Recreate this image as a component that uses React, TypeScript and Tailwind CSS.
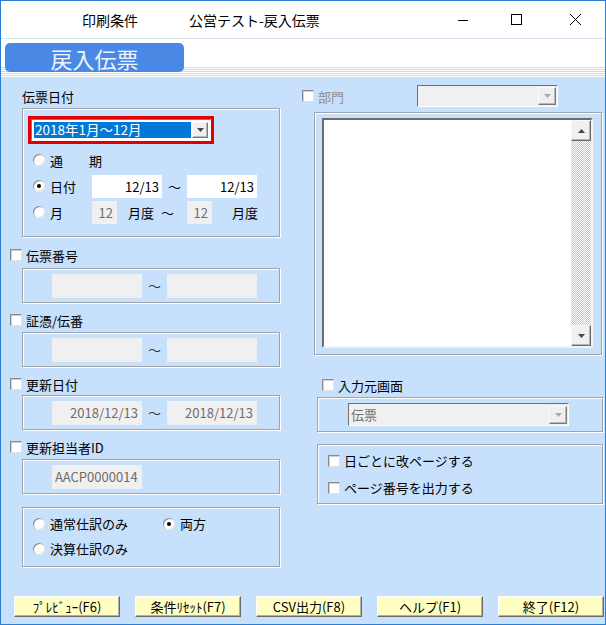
import React from 'react'
import clsx from 'clsx'

function Arrow({ up, disabled }: { up?: boolean; disabled?: boolean }) {
  return (
    <svg width="7" height="4" viewBox="0 0 7 4">
      <path d={up ? 'M0 4h7L3.5 0z' : 'M0 0h7L3.5 4z'} fill={disabled ? '#a8a8a8' : '#474747'} />
    </svg>
  )
}

function Check({ label, disabled }: { label?: string; disabled?: boolean }) {
  return (
    <span className="flex items-center gap-[4px]">
      <span className="w-[12px] h-[12px] bg-white border border-t-[#8a8a8a] border-l-[#8a8a8a] border-r-[#e2e2e2] border-b-[#e2e2e2] shadow-[inset_1px_1px_0_#d0d0d0]" />
      {label && <span className={disabled ? 'text-[#8f8f8f]' : 'text-black'}>{label}</span>}
    </span>
  )
}

function Radio({ checked }: { checked?: boolean }) {
  return (
    <span className="w-[12px] h-[12px] rounded-full bg-white shadow-[inset_1px_1px_0_#8c8c8c,inset_-1px_-1px_0_#e6e6e6] flex items-center justify-center">
      {checked && <span className="w-[4px] h-[4px] rounded-full bg-black" />}
    </span>
  )
}

function Group({ className, children }: { className?: string; children?: React.ReactNode }) {
  return (
    <div className={clsx('border border-[#9ea4aa] shadow-[inset_1px_1px_0_#ffffff,1px_1px_0_#ffffff]', className)}>
      {children}
    </div>
  )
}

function Field({ className, children }: { className?: string; children?: React.ReactNode }) {
  return <div className={clsx('flex items-center h-[23px]', className)}>{children}</div>
}

function DropBtn({ disabled, className }: { disabled?: boolean; className?: string }) {
  return (
    <div
      className={clsx(
        'flex items-center justify-center bg-[#efefef] border border-t-[#fafafa] border-l-[#fafafa] border-r-[#7a7a7a] border-b-[#7a7a7a] shadow-[inset_-1px_-1px_0_#b8b8b8]',
        className
      )}
    >
      <Arrow disabled={disabled} />
    </div>
  )
}

function Combo({ className, text, disabled }: { className?: string; text?: string; disabled?: boolean }) {
  return (
    <div
      className={clsx(
        'flex items-center bg-[#f0f0f0] border border-t-[#6f6f6f] border-l-[#6f6f6f] border-r-[#fdfdfd] border-b-[#fdfdfd] pr-[1px]',
        className
      )}
    >
      <span className="flex-1 pl-[2px] text-[#6f6f6f]">{text}</span>
      <DropBtn disabled={disabled} className="w-[18px] h-[18px]" />
    </div>
  )
}

function ScrollBtn({ up }: { up?: boolean }) {
  return (
    <div className="h-[21px] flex items-center justify-center bg-[#f0f0f0] border border-t-[#fafafa] border-l-[#fafafa] border-r-[#6a6a6a] border-b-[#6a6a6a] shadow-[inset_-1px_-1px_0_#b4b4b4]">
      <Arrow up={up} />
    </div>
  )
}

const buttons = ['ﾌﾟﾚﾋﾞｭｰ(F6)', '条件ﾘｾｯﾄ(F7)', 'CSV出力(F8)', 'ヘルプ(F1)', '終了(F12)']

export default function App() {
  return (
    <div className="w-[606px] h-[625px] flex flex-col overflow-hidden border border-[#2b7cd3] bg-white font-['Noto_Sans_CJK_JP','Noto_Sans_CJK_SC',sans-serif] text-[13px] leading-none text-black">
      {/* Title bar */}
      <div className="h-[38px] shrink-0 flex items-center border-b border-[#d6e3f1] text-[14px]">
        <span className="ml-[81px]">印刷条件</span>
        <span className="ml-[51px]">公営テスト-戻入伝票</span>
        <div className="ml-auto flex items-center mr-[24px]">
          <svg width="10" height="10" viewBox="0 0 10 10">
            <rect x="0" y="5" width="10" height="1" fill="#000" />
          </svg>
          <svg width="11" height="11" viewBox="0 0 11 11" className="ml-[43px]">
            <rect x="0.5" y="0.5" width="10" height="10" fill="none" stroke="#000" />
          </svg>
          <svg width="11" height="11" viewBox="0 0 11 11" className="ml-[48px]">
            <path d="M0 0L11 11M11 0L0 11" stroke="#000" strokeWidth="1" />
          </svg>
        </div>
      </div>

      {/* Header tab */}
      <div className="h-[38px] shrink-0 flex flex-col bg-white">
        <div className="relative z-10 pl-[4px] pt-[4px]">
          <div className="w-[179px] h-[29px] rounded-[5px] bg-[#4a88e6] flex items-center justify-center text-[22px] text-[#eef4ff]">
            戻入伝票
          </div>
        </div>
        <div className="-mt-[5px] h-[10px] bg-[image:repeating-linear-gradient(to_bottom,#c4dcf5_0px,#c4dcf5_1px,#ffffff_1px,#ffffff_2px)]" />
      </div>

      {/* Body */}
      <div className="flex-1 flex flex-col bg-[#c7e0fb]">
        <div className="flex">
          {/* Left column */}
          <div className="ml-[9px] w-[271px] flex flex-col">
            <div className="mt-[11px] ml-[12px] h-[16px] flex items-center">伝票日付</div>
            <Group className="mt-[4px] ml-[12px] w-[258px] pb-[11px]">
              <div className="ml-[5px] mt-[7px] w-[186px] h-[28px] border-[3px] border-[#e00000] flex">
                <div className="flex-1 flex items-center bg-white p-[2px] gap-[1px] border border-t-[#7a7a7a] border-l-[#7a7a7a] border-r-[#f8f8f8] border-b-[#f8f8f8]">
                  <div className="flex-1 h-full bg-[#0078d7] text-white text-[13.5px] flex items-center pl-[1px]">2018年1月～12月</div>
                  <DropBtn className="w-[16px] h-full" />
                </div>
              </div>
              <div className="mt-[3px] pl-[10px]">
                <div className="h-[26px] flex items-center gap-[5px]">
                  <Radio />
                  <span>通　　期</span>
                </div>
                <div className="h-[26px] flex items-center">
                  <div className="w-[59px] flex items-center gap-[5px]">
                    <Radio checked />
                    <span>日付</span>
                  </div>
                  <Field className="w-[70px] bg-white justify-end pr-[3px]">12/13</Field>
                  <span className="w-[25px] text-center">～</span>
                  <Field className="w-[70px] bg-white justify-end pr-[3px]">12/13</Field>
                </div>
                <div className="h-[26px] flex items-center">
                  <div className="w-[59px] flex items-center gap-[5px]">
                    <Radio />
                    <span>月</span>
                  </div>
                  <Field className="w-[25px] bg-[#f0f0f0] justify-end pr-[4px] text-[#6d6d6d]">12</Field>
                  <div className="w-[70px] flex items-center pl-[11px]">
                    <span>月度</span>
                    <span className="ml-[7px]">～</span>
                  </div>
                  <Field className="w-[25px] bg-[#f0f0f0] justify-end pr-[4px] text-[#6d6d6d]">12</Field>
                  <span className="ml-[20px]">月度</span>
                </div>
              </div>
            </Group>

            <div className="mt-[10px] h-[16px] flex items-center">
              <Check label="伝票番号" />
            </div>
            <Group className="mt-[5px] ml-[12px] w-[258px] h-[35px] flex items-center pl-[29px]">
              <Field className="w-[90px] h-[24px] bg-[#f0f0f0]" />
              <span className="w-[25px] text-center text-[#333]">～</span>
              <Field className="w-[90px] h-[24px] bg-[#f0f0f0]" />
            </Group>

            <div className="mt-[9px] h-[16px] flex items-center">
              <Check label="証憑/伝番" />
            </div>
            <Group className="mt-[4px] ml-[12px] w-[258px] h-[35px] flex items-center pl-[29px]">
              <Field className="w-[90px] h-[24px] bg-[#f0f0f0]" />
              <span className="w-[25px] text-center text-[#333]">～</span>
              <Field className="w-[90px] h-[24px] bg-[#f0f0f0]" />
            </Group>

            <div className="mt-[9px] h-[16px] flex items-center">
              <Check label="更新日付" />
            </div>
            <Group className="mt-[3px] ml-[12px] w-[258px] h-[35px] flex items-center pl-[29px]">
              <Field className="w-[90px] h-[24px] bg-[#f0f0f0] justify-end pr-[4px] text-[#6d6d6d]">2018/12/13</Field>
              <span className="w-[25px] text-center text-[#333]">～</span>
              <Field className="w-[90px] h-[24px] bg-[#f0f0f0] justify-end pr-[4px] text-[#6d6d6d]">2018/12/13</Field>
            </Group>

            <div className="mt-[9px] h-[16px] flex items-center">
              <Check label="更新担当者ID" />
            </div>
            <Group className="mt-[4px] ml-[12px] w-[258px] h-[35px] flex items-center pl-[29px]">
              <Field className="w-[90px] h-[24px] bg-[#f0f0f0] pl-[3px] text-[#6d6d6d]">AACP0000014</Field>
            </Group>

            <Group className="mt-[13px] ml-[12px] w-[258px] pt-[3px] pb-[5px] pl-[10px]">
              <div className="h-[25px] flex items-center">
                <div className="w-[130px] flex items-center gap-[5px]">
                  <Radio />
                  <span>通常仕訳のみ</span>
                </div>
                <div className="flex items-center gap-[5px]">
                  <Radio checked />
                  <span>両方</span>
                </div>
              </div>
              <div className="h-[25px] flex items-center gap-[5px]">
                <Radio />
                <span>決算仕訳のみ</span>
              </div>
            </Group>
          </div>

          {/* Right column */}
          <div className="ml-[19px] w-[304px] flex flex-col">
            <div className="mt-[8px] h-[22px] flex items-center">
              <div className="w-[117px] pl-[2px]">
                <Check label="部門" disabled />
              </div>
              <Combo className="w-[141px] h-[22px]" disabled />
            </div>

            <Group className="mt-[5px] ml-[14px] w-[288px] h-[243px] pl-[7px] pt-[5px]">
              <div className="w-[271px] h-[230px] bg-white flex justify-end border-2 border-t-[#6d6d6d] border-l-[#6d6d6d] border-r-[#f2f2f2] border-b-[#f2f2f2]">
                <div className="w-[20px] flex flex-col">
                  <ScrollBtn up />
                  <div className="flex-1 bg-[image:repeating-conic-gradient(#c6c6c6_0_25%,#ffffff_0_50%)] bg-[length:2px_2px]" />
                  <ScrollBtn />
                </div>
              </div>
            </Group>

            <div className="mt-[22px] ml-[22px] h-[16px] flex items-center">
              <Check label="入力元画面" />
            </div>
            <Group className="mt-[4px] ml-[17px] w-[286px] h-[35px] flex items-center pl-[30px]">
              <Combo className="w-[221px] h-[23px]" text="伝票" disabled />
            </Group>

            <Group className="mt-[12px] ml-[17px] w-[286px] pt-[2px] pb-[2px] pl-[10px]">
              <div className="h-[27px] flex items-center">
                <Check label="日ごとに改ページする" />
              </div>
              <div className="h-[27px] flex items-center">
                <Check label="ページ番号を出力する" />
              </div>
            </Group>
          </div>
        </div>

        {/* Function buttons */}
        <div className="mt-auto mb-[7px] pl-[13px] flex gap-[15px]">
          {buttons.map(b => (
            <div
              key={b}
              className="w-[106px] h-[21px] flex items-center justify-center bg-[#ffffc4] border border-t-white border-l-white border-r-[#6a6a6a] border-b-[#6a6a6a] shadow-[inset_-1px_-1px_0_#b0b0a0] text-[13px]"
            >
              {b}
            </div>
          ))}
        </div>
      </div>
    </div>
  )
}
